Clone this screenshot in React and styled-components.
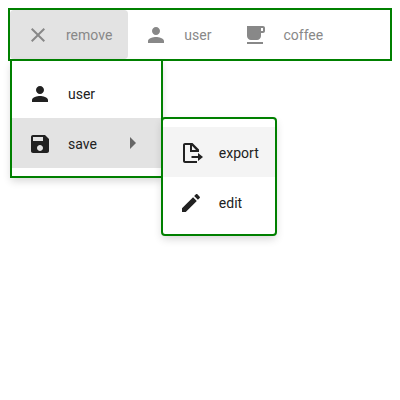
import React from "react";
import styled, { createGlobalStyle } from "styled-components";

const GlobalStyle = createGlobalStyle`
  * { box-sizing: border-box; }
  body {
    margin: 0;
    background: #fff;
    font: 14px/20px Roboto, "Noto Sans", sans-serif;
  }
`;

const Page = styled.main`
  min-height: 100vh;
  padding: 8px;
`;

const MenuBar = styled.ul`
  display: flex;
  margin: 0;
  padding: 0;
  list-style: none;
  border: 2px solid #008000;
`;

const Entry = styled.li`
  position: relative;
`;

const Item = styled.button`
  display: flex;
  align-items: center;
  gap: 16px;
  width: 100%;
  height: ${(p) => (p.$top ? 49 : 50)}px;
  margin: 0;
  padding: ${(p) => (p.$top ? "0 16px" : "2px 16px 0")};
  border: 0;
  border-radius: ${(p) => (p.$top ? 4 : 0)}px;
  background: ${(p) => p.$fill || "transparent"};
  color: ${(p) => (p.$top ? "#888" : "#212121")};
  font: inherit;
  text-align: left;
  white-space: nowrap;
`;

const Icon = styled.svg`
  flex: none;
  width: 24px;
  height: 24px;
  fill: currentColor;
`;

const Arrow = styled(Icon)`
  margin-left: 8px;
  color: #666;
`;

const Submenu = styled.ul`
  position: absolute;
  z-index: 1;
  margin: 0;
  list-style: none;
  border: 2px solid #008000;
  background: #fff;
  box-shadow: 0 4px 8px -1px rgba(0, 0, 0, 0.16);
`;

const DropSubmenu = styled(Submenu)`
  top: 100%;
  left: 0;
  padding: 7px 0 8px;
`;

const SideSubmenu = styled(Submenu)`
  top: -1px;
  left: 100%;
  padding: 8px 0 7px;
  border-radius: 4px;
`;

const paths = {
  close: "M19 6.41 17.59 5 12 10.59 6.41 5 5 6.41 10.59 12 5 17.59 6.41 19 12 13.41 17.59 19 19 17.59 13.41 12z",
  user: "M12 12c2.21 0 4-1.79 4-4s-1.79-4-4-4-4 1.79-4 4 1.79 4 4 4zm0 2c-2.67 0-8 1.34-8 4v2h16v-2c0-2.66-5.33-4-8-4z",
  coffee: "M20 3H4v10c0 2.21 1.79 4 4 4h6c2.21 0 4-1.79 4-4v-3h2c1.11 0 2-.89 2-2V5c0-1.11-.89-2-2-2zm0 5h-2V5h2v3zM4 19h16v2H4z",
  save: "M17 3H5c-1.11 0-2 .9-2 2v14c0 1.1.89 2 2 2h14c1.1 0 2-.9 2-2V7l-4-4zm-5 16c-1.66 0-3-1.34-3-3s1.34-3 3-3 3 1.34 3 3-1.34 3-3 3zm3-10H5V5h10v4z",
  export: "M6 2C4.9 2 4 2.9 4 4v16c0 1.1.9 2 2 2h12v-2H6V4h5v7h9V8.5L13.500 2H6zm7 2.800L17 9H13zM19 12v3H12.500v2H19v3l5-4z",
  edit: "M3 17.250V21h3.750L17.810 9.940l-3.750-3.750L3 17.250zM20.710 7.040c.39-.39.39-1.020 0-1.410l-2.340-2.340c-.39-.39-1.020-.39-1.410 0l-1.830 1.830 3.750 3.750 1.830-1.830z",
  arrow: "M9 17l6-6-6-6v12z",
};

function MenuItem({ icon, label, top, fill, children }) {
  return (
    <Entry>
      <Item type="button" $top={top} $fill={fill} disabled={top} aria-haspopup={children ? "menu" : undefined}>
        <Icon viewBox="0 0 24 24" aria-hidden="true"><path d={paths[icon]} /></Icon>
        <span>{label}</span>
        {children && !top && (
          <Arrow viewBox="0 0 24 24" aria-hidden="true"><path d={paths.arrow} /></Arrow>
        )}
      </Item>
      {children}
    </Entry>
  );
}

export default function App() {
  return (
    <>
      <GlobalStyle />
      <Page>
        <nav aria-label="Actions">
          <MenuBar>
            <MenuItem top icon="close" label="remove" fill="#e3e3e3">
              <DropSubmenu>
                <MenuItem icon="user" label="user" />
                <MenuItem icon="save" label="save" fill="#e3e3e3">
                  <SideSubmenu>
                    <MenuItem icon="export" label="export" fill="#f4f4f4" />
                    <MenuItem icon="edit" label="edit" />
                  </SideSubmenu>
                </MenuItem>
              </DropSubmenu>
            </MenuItem>
            <MenuItem top icon="user" label="user" />
            <MenuItem top icon="coffee" label="coffee" />
          </MenuBar>
        </nav>
      </Page>
    </>
  );
}
